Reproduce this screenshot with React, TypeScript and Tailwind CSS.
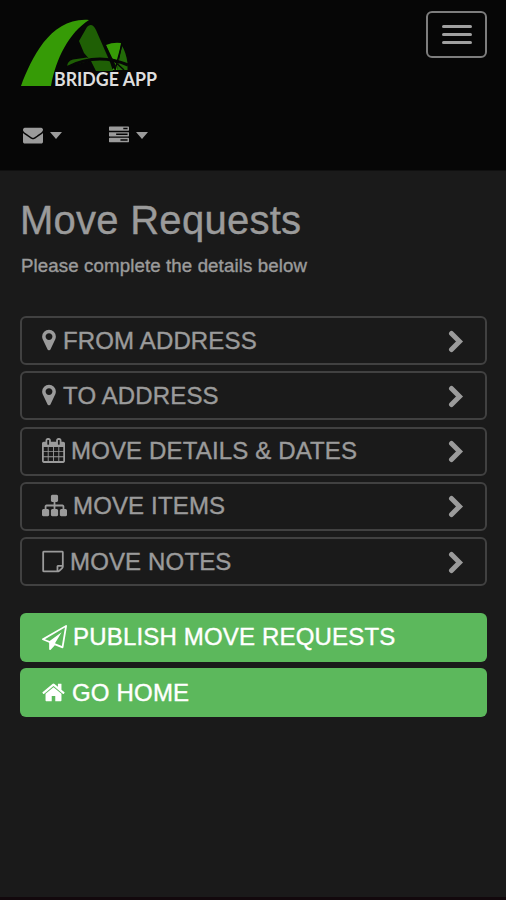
import React from 'react';

type IconName = 'marker' | 'calendar' | 'sitemap' | 'note' | 'plane' | 'home' | 'envelope' | 'tasks';

const iconPaths: Record<IconName, string> = {
  marker: 'M1152 640q0-106-75-181t-181-75-181 75-75 181 75 181 181 75 181-75 75-181zm256 0q0 109-33 179l-364 774q-16 33-47.5 52t-67.5 19-67.5-19-46.5-52l-365-774q-33-70-33-179 0-212 150-362t362-150 362 150 150 362z',
  calendar: 'M192 1664h288v-288h-288v288zm352 0h320v-288h-320v288zm-352-352h288v-320h-288v320zm352 0h320v-320h-320v320zm-352-384h288v-288h-288v288zm736 736h320v-288h-320v288zm-384-736h320v-288h-320v288zm768 736h288v-288h-288v288zm-384-352h320v-320h-320v320zm-352-864v-288q0-13-9.5-22.5t-22.5-9.5h-64q-13 0-22.5 9.5t-9.5 22.5v288q0 13 9.5 22.5t22.5 9.5h64q13 0 22.5-9.5t9.5-22.5zm736 864h288v-320h-288v320zm-384-384h320v-288h-320v288zm384 0h288v-288h-288v288zm32-480v-288q0-13-9.5-22.5t-22.5-9.5h-64q-13 0-22.5 9.5t-9.5 22.5v288q0 13 9.5 22.5t22.5 9.5h64q13 0 22.5-9.5t9.5-22.5zm384-64v1280q0 52-38 90t-90 38h-1408q-52 0-90-38t-38-90v-1280q0-52 38-90t90-38h128v-96q0-66 47-113t113-47h64q66 0 113 47t47 113v96h384v-96q0-66 47-113t113-47h64q66 0 113 47t47 113v96h128q52 0 90 38t38 90z',
  sitemap: 'M1792 1248v320q0 40-28 68t-68 28h-320q-40 0-68-28t-28-68v-320q0-40 28-68t68-28h96v-192h-512v192h96q40 0 68 28t28 68v320q0 40-28 68t-68 28h-320q-40 0-68-28t-28-68v-320q0-40 28-68t68-28h96v-192h-512v192h96q40 0 68 28t28 68v320q0 40-28 68t-68 28h-320q-40 0-68-28t-28-68v-320q0-40 28-68t68-28h96v-192q0-52 38-90t90-38h512v-192h-96q-40 0-68-28t-28-68v-320q0-40 28-68t68-28h320q40 0 68 28t28 68v320q0 40-28 68t-68 28h-96v192h512q52 0 90 38t38 90v192h96q40 0 68 28t28 68z',
  note: 'M1528 1280h-248v248q29-10 41-22l185-185q12-12 22-41zm-280-128h288v-896h-1280v1280h896v-288q0-40 28-68t68-28zm416-928v1024q0 40-20 88t-48 76l-184 184q-28 28-76 48t-88 20h-1024q-40 0-68-28t-28-68v-1344q0-40 28-68t68-28h1344q40 0 68 28t28 68z',
  plane: 'M1764 11q33 24 27 64l-256 1536q-5 29-32 45-14 8-31 8-11 0-24-5l-527-215-298 327q-18 21-47 21-14 0-23-4-19-7-30-23.5t-11-36.5v-452l-472-193q-37-14-40-55-3-39 32-59l1664-960q35-21 68 2zm-342 1499l221-1323-1434 827 336 137 863-639-478 797z',
  home: 'M1472 992v480q0 26-19 45t-45 19h-384v-384h-256v384h-384q-26 0-45-19t-19-45v-480q0-1 .5-3t.5-3l575-474 575 474q1 2 1 6zm223-69l-62 74q-8 9-21 11h-3q-13 0-21-7l-692-577-692 577q-12 8-24 7-13-2-21-11l-62-74q-8-10-7-23.5t11-21.5l719-599q32-26 76-26t76 26l244 204v-195q0-14 9-23t23-9h192q14 0 23 9t9 23v408l219 182q10 8 11 21.5t-7 23.5z',
  envelope: 'M1792 710v794q0 66-47 113t-113 47h-1472q-66 0-113-47t-47-113v-794q44 49 101 87 362 246 497 345 57 42 92.5 65.5t94.5 48 110 24.5h2q51 0 110-24.5t94.5-48 92.5-65.5q170-123 498-345 57-39 100-87zm0-294q0 79-49 151t-122 123q-376 261-468 325-10 7-42.5 31t-54 38.5-52 32.5-57.5 27-50 9h-2q-23 0-50-9t-57.5-27-52-32.5-54-38.5-42.5-31q-91-64-262-182.5t-205-142.5q-62-42-117-115.5t-55-136.5q0-78 41.5-130t118.5-52h1472q65 0 112.5 47t47.5 113z',
  tasks: 'M1024 1408h640v-128h-640v128zm-384-512h1024v-128h-1024v128zm640-512h384v-128h-384v128zm512 832v256q0 26-19 45t-45 19h-1664q-26 0-45-19t-19-45v-256q0-26 19-45t45-19h1664q26 0 45 19t19 45zm0-512v256q0 26-19 45t-45 19h-1664q-26 0-45-19t-19-45v-256q0-26 19-45t45-19h1664q26 0 45 19t19 45zm0-512v256q0 26-19 45t-45 19h-1664q-26 0-45-19t-19-45v-256q0-26 19-45t45-19h1664q26 0 45 19t19 45z',
};

// Each glyph keeps its own advance width, so labels start at different offsets
const iconBoxes: Record<IconName, { viewBox: string; className: string }> = {
  marker: { viewBox: '384 0 1024 1792', className: 'h-6 w-3.5 mr-[7px] -mt-0.5' },
  calendar: { viewBox: '64 0 1664 1792', className: 'h-[25px] w-[23px] mr-[6px] -mt-px' },
  sitemap: { viewBox: '0 0 1792 1792', className: 'h-[25px] w-[25px] mr-[6px] -mt-px' },
  note: { viewBox: '128 0 1536 1792', className: 'h-[25px] w-[22px] mr-[6px] -mt-px' },
  plane: { viewBox: '0 0 1792 1792', className: 'h-[25px] w-[25px] mr-[6px]' },
  home: { viewBox: '64 0 1664 1792', className: 'h-[25px] w-[23px] mr-[7px]' },
  envelope: { viewBox: '0 0 1792 1792', className: 'h-5 w-5' },
  tasks: { viewBox: '0 0 1792 1792', className: 'h-5 w-5' },
};

const sections: { icon: IconName; label: string }[] = [
  { icon: 'marker', label: 'FROM ADDRESS' },
  { icon: 'marker', label: 'TO ADDRESS' },
  { icon: 'calendar', label: 'MOVE DETAILS & DATES' },
  { icon: 'sitemap', label: 'MOVE ITEMS' },
  { icon: 'note', label: 'MOVE NOTES' },
];

const actions: { icon: IconName; label: string }[] = [
  { icon: 'plane', label: 'PUBLISH MOVE REQUESTS' },
  { icon: 'home', label: 'GO HOME' },
];

function Icon({ name }: { name: IconName }) {
  const box = iconBoxes[name];
  return (
    <svg viewBox={box.viewBox} className={`shrink-0 ${box.className}`} fill="currentColor" aria-hidden="true">
      <path d={iconPaths[name]} />
    </svg>
  );
}

function Logo() {
  return (
    <svg width="140" height="72" viewBox="20 18 140 72" aria-label="Bridge App">
      {/* Towers */}
      <path d="M79 41L87 27Q92 22 96 30L110 62L113 71H96L91 61L84 53Z" fill="#1f5f05" />
      <path d="M106 45Q113 42 121 43L117 70H112L116 66Z" fill="#369b06" />
      <path d="M122 46Q126 52 127.5 63V70H117Z" fill="#226b08" />
      <path d="M67 67Q67 61 73 59.5L87 57.5L92 60Z" fill="#1f5f05" />
      {/* Deck and cables */}
      <path d="M67 67.5Q97 52 128 65" fill="none" stroke="#060606" strokeWidth="3" />
      <path d="M105 45L115 69M122 44L115 70M112 59L124 70" fill="none" stroke="#060606" strokeWidth="1.5" />
      <path d="M21 86C32 57 51 17 89 20C69 33 56 58 51 86Z" fill="#369b06" />
      <text x="54" y="86" fill="#dedede" fontSize="18" fontWeight="700" textLength="103" lengthAdjust="spacingAndGlyphs" className="font-['Lato',sans-serif]">
        BRIDGE APP
      </text>
    </svg>
  );
}

function Caret() {
  return (
    <svg width="12" height="7" viewBox="0 0 12 7" fill="currentColor" aria-hidden="true">
      <path d="M0 0H12L6 7Z" />
    </svg>
  );
}

export default function App() {
  return (
    <div className="flex h-[900px] w-full flex-col border-b-[3px] border-[#12080c] bg-[#1a1a1a] font-['Liberation_Sans',Arial,sans-serif] text-[#9b9b9b] [-webkit-text-stroke:0.4px_currentColor]">
      {/* Header */}
      <header className="h-[171px] shrink-0 border-b border-[#101010] bg-[#060606]">
        <div className="flex items-start justify-between pl-5 pr-[19px]">
          <div className="pt-[18px]">
            <Logo />
          </div>
          <button
            aria-label="Menu"
            className="mt-[11px] flex h-[47px] w-[61px] flex-col items-center justify-center gap-[5px] rounded-md border-2 border-[#7d7d7d]"
          >
            <span className="h-[3px] w-[30px] rounded-sm bg-[#a0a0a0]" />
            <span className="h-[3px] w-[30px] rounded-sm bg-[#a0a0a0]" />
            <span className="h-[3px] w-[30px] rounded-sm bg-[#a0a0a0]" />
          </button>
        </div>
        <nav className="flex items-center gap-[47px] pl-[23px] pt-[35px]">
          <button className="flex items-center gap-[7px]">
            <Icon name="envelope" />
            <Caret />
          </button>
          <button className="flex items-center gap-[7px]">
            <Icon name="tasks" />
            <Caret />
          </button>
        </nav>
      </header>

      {/* Main Content */}
      <main className="pl-5 pr-[19px] pt-[26px]">
        <h1 className="text-[40px] leading-[46px] tracking-[0.26px]">Move Requests</h1>
        <p className="mt-[9px] pl-px text-[18.67px] leading-[27px] tracking-[0.12px]">Please complete the details below</p>

        <div className="mt-[37px] flex flex-col gap-[6.3px]">
          {sections.map(section => (
            <button
              key={section.label}
              className="flex h-[49px] items-center rounded-md border-2 border-[#414141] pl-5 pr-5 text-2xl tracking-[0.15px]"
            >
              <Icon name={section.icon} />
              <span>{section.label}</span>
              <svg width="18" height="24" viewBox="0 0 18 24" className="ml-auto" aria-hidden="true">
                <path d="M4.5 4.5L12.5 12.5L4.5 20.5" fill="none" stroke="currentColor" strokeWidth="5" strokeLinecap="round" />
              </svg>
            </button>
          ))}
        </div>

        <div className="mt-[26.6px] flex flex-col gap-[6.3px]">
          {actions.map(action => (
            <button
              key={action.label}
              className="flex h-[49px] items-center rounded-md bg-[#5cb85c] pl-[22px] text-2xl tracking-[0.18px] text-white"
            >
              <Icon name={action.icon} />
              <span>{action.label}</span>
            </button>
          ))}
        </div>
      </main>
    </div>
  );
}
